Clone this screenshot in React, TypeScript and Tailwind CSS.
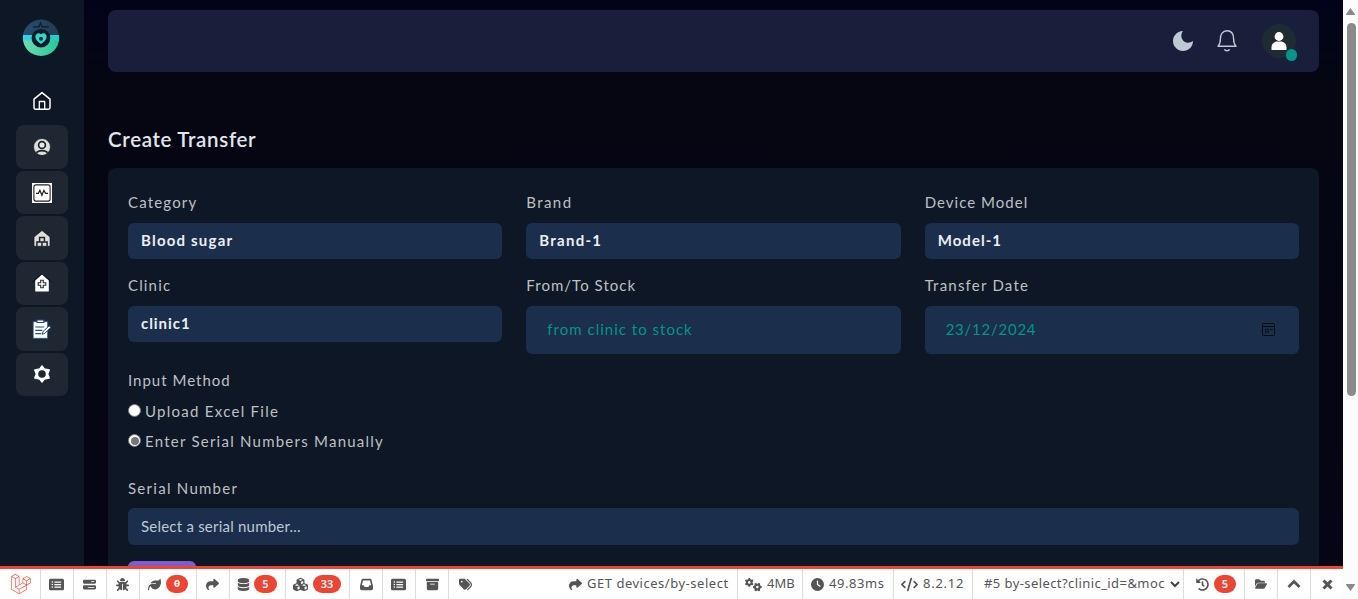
import type { ReactNode } from "react";
import {
  FaRectangleList, FaBarsProgress, FaBug, FaLeaf, FaShare, FaDatabase, FaCubes,
  FaInbox, FaBoxArchive, FaTags, FaGears, FaClock, FaCode, FaFolderOpen, FaLaravel,
} from "react-icons/fa6";
import { FaHistory } from "react-icons/fa";

function Logo() {
  return (
    <svg className="h-[38px] w-[38px]" viewBox="0 0 38 38">
      <defs>
        <linearGradient id="logoTop" x1="0" y1="0" x2="1" y2="0">
          <stop offset="0" stopColor="#23506e" />
          <stop offset="1" stopColor="#26384f" />
        </linearGradient>
        <linearGradient id="logoBottom" x1="0" y1="0" x2="1" y2="0">
          <stop offset="0" stopColor="#72ddb0" />
          <stop offset="1" stopColor="#20c79c" />
        </linearGradient>
        <linearGradient id="logoBand" x1="0" y1="0" x2="1" y2="0">
          <stop offset="0" stopColor="#38d0ea" />
          <stop offset="1" stopColor="#20cfb8" />
        </linearGradient>
        <clipPath id="logoClip"><circle cx="19" cy="18.8" r="18.2" /></clipPath>
      </defs>
      <g clipPath="url(#logoClip)">
        <rect width="38" height="17" fill="url(#logoTop)" />
        <rect y="21" width="38" height="17" fill="url(#logoBottom)" />
        <rect y="16" width="38" height="5.5" fill="url(#logoBand)" />
      </g>
      <path d="M11 7.800h6l1.500-4 1.600 4H27" fill="none" stroke="#0b1c2e" strokeWidth="1.200" />
      <circle cx="19" cy="19.200" r="9.300" fill="#0d1b2d" />
      <path d="M19 25c-3.500-2.200-5.600-4.600-5.600-7.200 0-3.400 3.600-4.500 5.600-2.500 2-2 5.600-.9 5.600 2.500 0 2.600-2.100 5-5.600 7.200z" fill="#2edcc5" />
      <circle cx="19" cy="19.800" r="2" fill="#0d2b3b" />
    </svg>
  );
}

function HomeIcon() {
  return (
    <svg className="h-5 w-5" viewBox="0 0 20 20" fill="none" stroke="#fff" strokeWidth="1.5" strokeLinejoin="round">
      <path d="M2 8.1 10 1.600l8 6.500v8.400c0 1-.6 1.700-1.600 1.700H3.600c-1 0-1.600-.7-1.600-1.700z" />
      <path d="M7.300 18v-7.500h5.400V18" strokeWidth="1.300" />
    </svg>
  );
}

function UserIcon() {
  return (
    <svg className="h-5 w-5" viewBox="0 0 20 20">
      <circle cx="10" cy="10" r="8.500" fill="#dededc" stroke="#151b20" strokeWidth=".8" />
      <circle cx="10" cy="8" r="3.400" fill="#e8e8e6" stroke="#20252a" strokeWidth="1.700" />
      <path d="M4.400 15.700c2.200-2.900 9-2.900 11.200 0" fill="none" stroke="#20252a" strokeWidth="1.700" />
    </svg>
  );
}

function DeviceIcon() {
  return (
    <svg className="mt-[2px] h-5 w-5" viewBox="0 0 20 20" fill="none" stroke="#222">
      <rect width="20" height="20" fill="#fff" stroke="none" />
      <rect x="1.900" y="1.900" width="16.200" height="16.200" rx="2" strokeWidth="1.100" />
      <path d="M4 10.300h2.400l1.500-3 2 5 2-5 1.600 3H16" strokeWidth="1.200" />
    </svg>
  );
}

function WarehouseIcon() {
  return (
    <svg className="mt-[2px] h-5 w-5" viewBox="0 0 20 20">
      <path d="M2 8 10 1.500 18 8v9.300H2z" fill="#dededc" stroke="#14191e" strokeWidth=".7" />
      <path d="M4.900 17.300v-4.200h10.200v4.200M10 13v4.300M7.600 13V8.600h4.800V13" fill="none" stroke="#20252a" strokeWidth="1.500" />
    </svg>
  );
}

function ClinicIcon() {
  return (
    <svg className="h-5 w-5" viewBox="0 0 20 20">
      <path d="M1 8.800 10 1l9 7.800" fill="none" stroke="#0b1015" strokeWidth="1.300" />
      <path d="M3.200 7.500 10 1.500l6.800 6v10.900H3.200z" fill="#fff" />
      <path d="M8.700 7.200h2.600v2.500h2.500v2.600h-2.500v2.500H8.700v-2.500H6.200V9.700h2.500z" fill="#fff" stroke="#252b32" strokeWidth="1.100" />
    </svg>
  );
}

function TransferIcon() {
  return (
    <svg className="mt-px h-5 w-5" viewBox="0 0 20 20">
      <path d="M1.200 2.700h14.400V19.300H1.200z" fill="#fff" stroke="#23518b" strokeWidth=".7" />
      <path d="M5 1h6.800v2.500H5z" fill="#fff" stroke="#234b80" strokeWidth="1.100" />
      <path d="M3.300 8h8.800M3.300 11.300h7M3.300 14.700h6" stroke="#234b80" strokeWidth="1.200" />
      <path d="m10.300 15.300.7-2.800 6.200-5.700 1.600 1.700-6.100 5.900z" fill="#fff" stroke="#234b80" strokeWidth="1" />
    </svg>
  );
}

function GearIcon() {
  return (
    <svg className="h-5 w-5" viewBox="0 0 20 20">
      <path d="M10 2 12.300 5.100 17.200 6 15.600 10 17.200 14 12.300 14.900 10 18 7.700 14.900 2.800 14 4.400 10 2.800 6 7.700 5.100z" fill="#fff" stroke="#fff" strokeWidth="1.500" strokeLinejoin="round" />
      <circle cx="10" cy="10" r="3.800" fill="#202631" />
    </svg>
  );
}

const sideItems = [
  <UserIcon key="user" />, <DeviceIcon key="device" />, <WarehouseIcon key="warehouse" />,
  <ClinicIcon key="clinic" />, <TransferIcon key="transfer" />, <GearIcon key="settings" />,
];

function Sidebar() {
  return (
    <aside className="flex w-[84px] shrink-0 flex-col items-center bg-[#0e1726]">
      <div className="mt-[19px] mr-[2px] h-[38px]"><Logo /></div>
      <div className="mt-[34px] mb-[14px]"><HomeIcon /></div>
      <nav className="flex flex-col gap-[2px]">
        {sideItems.map((icon, i) => (
          <div key={i} className="flex h-[43.5px] w-[52px] items-center justify-center rounded-lg bg-[#1f2733]">{icon}</div>
        ))}
      </nav>
    </aside>
  );
}

function Header() {
  return (
    <header className="flex h-[62px] items-center justify-end rounded-lg bg-[#191e3a] pr-[23px]">
      <svg className="mr-[24px] h-5 w-5" viewBox="0 0 20 20">
        <path d="M10 0C8.200 2.300 7.800 5.200 9 7.800c1.800 4 6.800 5.300 11 2.200C20 15.800 15.500 20 10 20S0 15.500 0 10 4.500 0 10 0z" fill="#bfc9d4" />
      </svg>
      <svg className="mr-[25px] h-[22px] w-5" viewBox="0 0 20 22" fill="none" stroke="#bfc9d4" strokeWidth="1.400" strokeLinejoin="round">
        <path d="M1 16.200c1.700-1.600 2.400-3.300 2.400-7.100C3.400 4.200 5.600.8 10 .8s6.600 3.400 6.600 8.300c0 3.800.7 5.500 2.400 7.100z" />
        <path d="M7.500 19.300c.6 1.900 4.400 1.900 5 0" />
      </svg>
      <div className="relative h-[34px] w-[34px] rounded-full bg-[#1f2b33]">
        <svg className="h-[34px] w-[34px]" viewBox="0 0 34 34" fill="#fff">
          <circle cx="17" cy="12.500" r="4.400" />
          <path d="M9.500 26v-2.500c0-3.500 2.500-6 6-6h3c3.500 0 6 2.500 6 6V26z" />
        </svg>
        <span className="absolute top-[25px] left-[24px] h-3 w-[11px] rounded-full bg-[#009688]" />
      </div>
    </header>
  );
}

function Label({ children, className = "" }: { children: ReactNode; className?: string }) {
  return <div className={`h-5 text-[15px] leading-[18px] whitespace-nowrap text-[#bfc0c2] ${className}`}>{children}</div>;
}

function Select({ children, className = "" }: { children: ReactNode; className?: string }) {
  return <div className={`mt-[10px] h-9 rounded-md bg-[#1b2e4b] px-[13px] text-[15px] leading-[34px] font-bold text-[#eceef2] ${className}`}>{children}</div>;
}

function Radio({ checked = false }: { checked?: boolean }) {
  return (
    <span className="-mt-px mr-1 flex h-[13px] w-[13px] items-center justify-center rounded-full border border-[#767676] bg-white">
      {checked && <span className="h-[8px] w-[8px] rounded-full bg-[#767676]" />}
    </span>
  );
}

function Form() {
  return (
    <section className="mt-[18px] h-[480px] rounded-t-lg bg-[#0e1726] px-5 pt-[25px]">
      <div className="grid grid-cols-3 gap-x-6">
        <div className="h-[83px]"><Label className="tracking-[1.17px]">Category</Label><Select className="tracking-[1.2px]">Blood sugar</Select></div>
        <div><Label className="tracking-[1.4px]">Brand</Label><Select className="tracking-[1.25px]">Brand-1</Select></div>
        <div><Label className="tracking-[1.03px]">Device Model</Label><Select className="tracking-[1.05px]">Model-1</Select></div>
        <div className="h-[95px]"><Label className="tracking-[1.15px]">Clinic</Label><Select className="tracking-[0.95px]">clinic1</Select></div>
        <div>
          <Label className="tracking-[1.03px]">From/To Stock</Label>
          <div className="mt-[10px] flex h-12 items-center rounded-md bg-[#1b2e4b] px-[21px] pb-0.5 text-[15px] tracking-[1.01px] text-[#009688]">from clinic to stock</div>
        </div>
        <div>
          <Label className="tracking-[1.22px]">Transfer Date</Label>
          <div className="mt-[10px] flex h-12 items-center justify-between rounded-md bg-[#1b2e4b] pr-6 pl-[21px] text-[15px] tracking-[0.75px] text-[#009688]">
            <span className="pb-0.5">23/12/2024</span>
            <svg className="mb-px h-[13px] w-[13px]" viewBox="0 0 13 13" fill="none" stroke="#050a12" strokeWidth="1">
              <rect x=".5" y=".5" width="12" height="12" rx="1" />
              <path d="M1 3.500h11" />
              <path d="M3 6.500h8M3 9h5" strokeWidth="1.300" strokeDasharray="1.500 1" />
            </svg>
          </div>
        </div>
      </div>
      <Label className="tracking-[1px]">Input Method</Label>
      <Label className="mt-[10px] flex items-center tracking-[1.27px]"><Radio />Upload Excel File</Label>
      <Label className="mt-[10px] flex items-center tracking-[1.24px]"><Radio checked />Enter Serial Numbers Manually</Label>
      <Label className="mt-[28px] tracking-[1.27px]">Serial Number</Label>
      <div className="mt-[9px] h-[37px] rounded-md bg-[#1b2e4b] px-[13px] text-[15px] leading-[36px] tracking-[0.22px] text-[#bfc9d4]">Select a serial number...</div>
      <div className="mt-4 h-9 w-[68px] rounded-md bg-[#805dca]" />
    </section>
  );
}

function Tool({ children, className }: { children?: ReactNode; className: string }) {
  return <div className={`flex h-full shrink-0 items-center overflow-hidden whitespace-nowrap ${className}`}>{children}</div>;
}

function Badge({ children, className }: { children: ReactNode; className: string }) {
  return <span className={`flex h-[18px] items-center justify-center rounded-full bg-[#ee4433] text-[11px] font-semibold text-white ${className}`}>{children}</span>;
}

function DebugBar() {
  return (
    <footer className="flex h-[33px] w-[1343px] border-t-[3px] border-[#ee4433] bg-white font-['Noto_Sans',sans-serif] text-[13px] text-[#555]">
      <Tool className="w-10 pl-[11px]"><FaLaravel className="h-5 w-5 text-[#ff4433]" /></Tool>
      <Tool className="w-[33px] border-l border-[#ddd] pl-2"><FaRectangleList size={15} /></Tool>
      <Tool className="w-[33px] border-l border-[#ddd] pl-[9px]"><FaBarsProgress size={13} /></Tool>
      <Tool className="w-[33px] border-l border-[#ddd] pl-[9px]"><FaBug size={13} /></Tool>
      <Tool className="w-[57px] border-l border-[#ddd] pl-2"><FaLeaf size={13} /><Badge className="ml-[5px] w-[22px] font-['Liberation_Mono',monospace]">0</Badge></Tool>
      <Tool className="w-[33px] border-l border-[#ddd] pl-[9px]"><FaShare size={13} /></Tool>
      <Tool className="w-14 border-l border-[#ddd] pl-[7px]"><FaDatabase size={13} /><Badge className="ml-1 w-[23px]">5</Badge></Tool>
      <Tool className="w-16 border-l border-[#ddd] pl-[7px]"><FaCubes size={15} /><Badge className="ml-[5px] w-7">33</Badge></Tool>
      <Tool className="w-[33px] justify-center border-l border-[#ddd]"><FaInbox size={13} /></Tool>
      <Tool className="w-[33px] border-l border-[#ddd] pl-2"><FaRectangleList size={15} /></Tool>
      <Tool className="w-[33px] justify-center border-l border-[#ddd]"><FaBoxArchive size={13} /></Tool>
      <Tool className="w-[33px] justify-center border-l border-[#ddd]"><FaTags size={13} /></Tool>
      <Tool className="ml-auto w-[168px]"><FaShare size={13} /><span className="ml-[5px] tracking-[0.52px]">GET devices/by-select</span></Tool>
      <Tool className="w-[65px] border-l border-[#ddd] pl-[7px]"><FaGears size={17} /><span className="ml-[5px]">4MB</span></Tool>
      <Tool className="w-[91px] border-l border-[#ddd] pl-2"><FaClock size={13} /><span className="ml-[5px] tracking-[0.55px]">49.83ms</span></Tool>
      <Tool className="w-[79px] border-l border-[#ddd] pl-[7px]"><FaCode size={17} /><span className="ml-[5px] tracking-[0.75px]">8.2.12</span></Tool>
      <Tool className="w-[211px] border-l border-[#ddd] pl-[11px]">
        <span className="w-[182px] tracking-[0.42px]">#5 by-select?clinic_id=&amp;moc</span>
        <svg className="ml-1 h-2 w-[10px]" viewBox="0 0 10 8" fill="none" stroke="#444" strokeWidth="2"><path d="m1 2 4 4 4-4" /></svg>
      </Tool>
      <Tool className="w-[61px] border-l border-[#ddd] pl-3"><FaHistory size={13} /><Badge className="ml-[5px] w-[22px]">5</Badge></Tool>
      <Tool className="w-[33px] justify-center border-l border-[#ddd]"><FaFolderOpen size={12} /></Tool>
      <Tool className="w-[33px] justify-center border-l border-[#ddd]">
        <svg className="h-3 w-[14px]" viewBox="0 0 14 12" fill="none" stroke="#555" strokeWidth="2.800"><path d="m1.500 9 5.500-5.500L12.500 9" /></svg>
      </Tool>
      <Tool className="w-[33px] border-l border-[#ddd] pl-[11px]">
        <svg className="h-[11px] w-[11px]" viewBox="0 0 11 11" fill="none" stroke="#555" strokeWidth="3"><path d="m1.500 1.500 8 8m0-8-8 8" /></svg>
      </Tool>
    </footer>
  );
}

export default function App() {
  return (
    <div className="flex h-[599px] w-[1358px] overflow-hidden bg-[#050615] font-['Lato','Noto_Sans',sans-serif]">
      <div className="flex w-[1343px] flex-col">
        <div className="flex h-[566px] overflow-hidden">
          <Sidebar />
          <main className="flex-1 bg-linear-to-b from-[#02031a] via-[#050612] via-[15%] to-[#050515] px-6 pt-[10px]">
            <Header />
            <h1 className="mt-[54px] h-6 text-[20.5px] leading-[26px] font-semibold tracking-[0.67px] text-[#e0e6ed]">Create Transfer</h1>
            <Form />
          </main>
        </div>
        <DebugBar />
      </div>
      <div className="flex w-[15px] flex-col items-center bg-[#fcfcfc]">
        <svg className="mt-[8px] h-[7px] w-[9px]" viewBox="0 0 9 7" fill="#8b8b8b"><path d="M4.500 0 9 6.200a.5.500 0 0 1-.5.800h-8a.5.500 0 0 1-.5-.8z" /></svg>
        <div className="mt-2 ml-px h-[373px] w-[9px] rounded-full bg-[#8b8b8b]" />
        <svg className="mt-auto mb-[8px] h-[7px] w-[9px]" viewBox="0 0 9 7" fill="#8b8b8b"><path d="M4.500 7 9 .8A.5.500 0 0 0 8.500 0h-8A.5.500 0 0 0 0 .8z" /></svg>
      </div>
    </div>
  );
}
